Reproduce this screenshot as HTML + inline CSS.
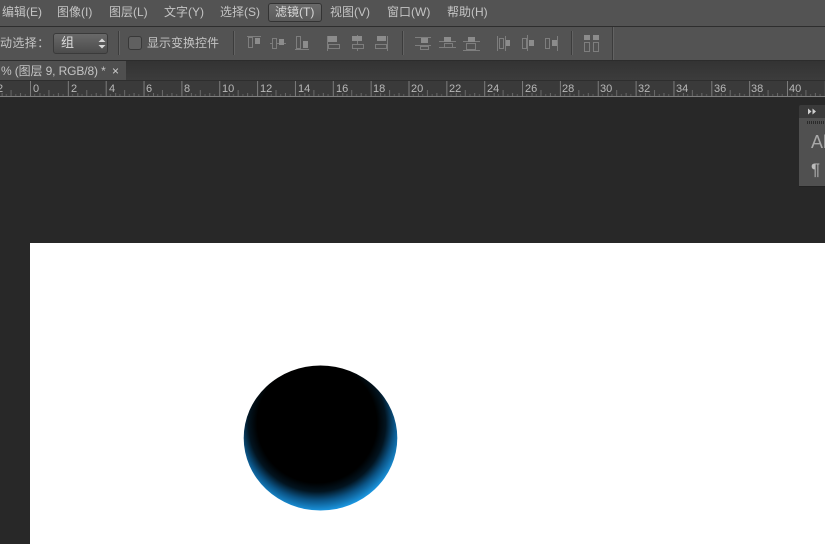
<!DOCTYPE html>
<html><head><meta charset="utf-8">
<style>
html,body{margin:0;padding:0;background:#282828;}
body{width:825px;height:544px;position:relative;overflow:hidden;font-family:"Liberation Sans","Noto Sans CJK SC",sans-serif;color:#c8c8c8;}
.a{position:absolute;}
.m{position:absolute;top:3px;height:18px;line-height:18px;font-size:12px;white-space:nowrap;color:#c4c4c4;filter:blur(0.25px);}
</style></head><body>
<div class="a" style="left:0;top:0;width:825px;height:26px;background:#535353;"></div>
<div class="a" style="left:0;top:26px;width:825px;height:1px;background:#2e2e2e;"></div>
<div class="a" style="left:268px;top:3px;width:52px;height:17px;background:linear-gradient(#6a6a6a,#5a5a5a);border:1px solid #333;border-radius:3px;"></div>
<div class="m" style="left:2px;">编辑(E)</div>
<div class="m" style="left:57px;">图像(I)</div>
<div class="m" style="left:109px;">图层(L)</div>
<div class="m" style="left:164px;">文字(Y)</div>
<div class="m" style="left:220px;">选择(S)</div>
<div class="m" style="left:275px;color:#d8d8d8;">滤镜(T)</div>
<div class="m" style="left:330px;">视图(V)</div>
<div class="m" style="left:387px;">窗口(W)</div>
<div class="m" style="left:447px;">帮助(H)</div>

<div class="a" style="left:0;top:27px;width:825px;height:33px;background:#535353;"></div>
<div class="a" style="left:0;top:60px;width:825px;height:1px;background:#2c2c2c;"></div>
<div class="m" style="left:0;top:34px;letter-spacing:0.4px;">动选择：</div>
<div class="a" style="left:53px;top:33px;width:55px;height:21px;box-sizing:border-box;background:linear-gradient(#696969,#4c4c4c);border:1px solid #3a3a3a;border-radius:3px;"></div>
<div class="m" style="left:61px;top:34px;color:#dcdcdc;font-size:13px;">组</div>
<svg class="a" style="left:0;top:0;" width="825" height="62" fill="none">
<path d="M98.500 42l3.500-3.500 3.500 3.500zM98.500 45h7l-3.500 3.500z" fill="#d8d8d8"/>
<g stroke="#3c3c3c"><path d="M118.500 31v24M233.500 31v24M402.500 31v24M571.500 31v24M612.500 27v33"/></g>
<g stroke="#636363"><path d="M119.500 31v24M234.500 31v24M403.500 31v24M572.500 31v24M613.500 27v33"/></g>
<g filter="url(#soft)">
<g stroke="#7e7e7e" stroke-width="1">
<path d="M247 36.500h14M248.500 37.500h4v10h-4z"/>
<path d="M270 43.500h2M276 43.500h3M284 43.500h2M272.500 38.500h4v10h-4z"/>
<path d="M295 49.500h14M296.500 36.500h4v12h-4z"/>
<path d="M327.500 36v15M328.500 44.500h11v4h-11z"/>
<path d="M357.500 35v2M357.500 41v3M357.500 49v2M352.500 44.500h11v4h-11z"/>
<path d="M387.500 36v15M375.500 44.500h11v4h-11z"/>
<path d="M415 37.500h16M415 45.500h16M420.500 46.500h8v3h-8z"/>
<path d="M439 41.500h5M451 41.500h5M439 47.500h17M444.500 43.500h8v4h-8z"/>
<path d="M463 41.500h17M463 50.500h17M466.500 43.500h9v6h-9z"/>
<path d="M497.500 36v15M505.500 36v15M499.500 38.500h4v10h-4z"/>
<path d="M527.500 35v16M522.500 38.500h4v10h-4z"/>
<path d="M557.500 36v15M545.500 38.500h4v10h-4z"/>
<path d="M584.500 42.500h5v9h-5zM593.500 42.500h5v9h-5z"/>
</g>
<g fill="#8c8c8c">
<rect x="255" y="38" width="5" height="6"/>
<rect x="279" y="39" width="5" height="6"/>
<rect x="303" y="41" width="5" height="7"/>
<rect x="328" y="36" width="9" height="6"/>
<rect x="352" y="36" width="10" height="5"/>
<rect x="377" y="36" width="9" height="5"/>
<rect x="421" y="38" width="7" height="5"/>
<rect x="444" y="37" width="7" height="5"/>
<rect x="468" y="37" width="7" height="5"/>
<rect x="506" y="40" width="4" height="6"/>
<rect x="529" y="40" width="5" height="6"/>
<rect x="552" y="40" width="5" height="6"/>
<rect x="584" y="35" width="6" height="5"/>
<rect x="593" y="35" width="6" height="5"/>
</g>
</g>
<defs><filter id="soft"><feGaussianBlur stdDeviation="0.35"/></filter></defs>
</svg>
<div class="a" style="left:128px;top:36px;width:14px;height:14px;box-sizing:border-box;background:#606060;border:1px solid #383838;border-radius:3px;"></div>
<div class="m" style="left:147px;top:34px;">显示变换控件</div>

<div class="a" style="left:0;top:61px;width:825px;height:19px;background:linear-gradient(#333,#3c3c3c);"></div>
<div class="a" style="left:0;top:61px;width:126px;height:19px;background:#4f4f4f;"></div>
<div class="m" style="left:1px;top:62px;font-size:12px;white-space:pre;letter-spacing:-0.12px;">% (图层 9, RGB/8) *</div>
<div class="m" style="left:112px;top:62px;font-size:12px;color:#d0d0d0;">×</div>

<svg class="a" style="left:0;top:80px;" width="825" height="18">
<defs>
<pattern id="t" x="30" y="0" width="37.85" height="18" patternUnits="userSpaceOnUse">
<path d="M0.500 1v16" stroke="#7c7c7c"/>
<path d="M9.960 13v4M18.920 10v7M28.380 13v4" stroke="#686868"/>
<path d="M4.730 14v3M14.190 14v3M23.650 14v3M33.110 14v3" stroke="#5c5c5c"/>
</pattern>
</defs>
<rect width="825" height="18" fill="#3a3a3a"/>
<rect width="825" height="18" fill="url(#t)"/>
<rect y="0" width="825" height="1" fill="#2e2e2e"/>
<rect y="16" width="825" height="1" fill="#7e7e7e"/>
<rect y="17" width="825" height="1" fill="#2a2a2a"/>
<g fill="#b8b8b8" font-size="11" font-family="Liberation Sans, sans-serif" filter="url(#soft2)">
<text x="-3" y="12">2</text>
<text x="33" y="12">0</text>
<text x="71" y="12">2</text>
<text x="109" y="12">4</text>
<text x="146" y="12">6</text>
<text x="184" y="12">8</text>
<text x="222" y="12">10</text>
<text x="260" y="12">12</text>
<text x="298" y="12">14</text>
<text x="336" y="12">16</text>
<text x="373" y="12">18</text>
<text x="411" y="12">20</text>
<text x="449" y="12">22</text>
<text x="487" y="12">24</text>
<text x="525" y="12">26</text>
<text x="562" y="12">28</text>
<text x="600" y="12">30</text>
<text x="638" y="12">32</text>
<text x="676" y="12">34</text>
<text x="714" y="12">36</text>
<text x="751" y="12">38</text>
<text x="789" y="12">40</text>
</g>
<defs><filter id="soft2"><feGaussianBlur stdDeviation="0.25"/></filter></defs>
</svg>

<div class="a" style="left:799px;top:105px;width:26px;height:13px;background:#3a3a3a;border-radius:2px 0 0 0;"></div>
<div class="a" style="left:799px;top:118px;width:26px;height:69px;background:#505050;border-bottom:1px solid #222;box-sizing:border-box;"></div>
<svg class="a" style="left:799px;top:105px;" width="26" height="30">
<path d="M9 3.500l3.500 3-3.500 3zM13.500 3.500l3.500 3-3.500 3z" fill="#d0d0d0"/>
<path d="M8.500 16v3M10.500 16v3M12.500 16v3M14.500 16v3M16.500 16v3M18.500 16v3M20.500 16v3M22.500 16v3M24.500 16v3" stroke="#2a2a2a"/>
</svg>
<div class="a" style="left:811px;top:132px;font-size:18px;line-height:20px;color:#a8a8a8;">Al</div>
<div class="a" style="left:811px;top:160px;font-size:17px;line-height:20px;color:#bcbcbc;">¶</div>

<div class="a" style="left:30px;top:243px;width:795px;height:301px;background:#fff;"></div>
<svg class="a" style="left:0;top:0;" width="825" height="544">
<defs>
<radialGradient id="g" gradientUnits="userSpaceOnUse" cx="317" cy="423" r="88">
<stop offset="0" stop-color="#000"/>
<stop offset="0.68" stop-color="#000"/>
<stop offset="0.78" stop-color="#021420"/>
<stop offset="0.88" stop-color="#0b5486"/>
<stop offset="1" stop-color="#1b96e0"/>
</radialGradient>
</defs>
<ellipse cx="320.500" cy="438" rx="76.800" ry="72.500" fill="url(#g)"/>
</svg>
</body></html>
